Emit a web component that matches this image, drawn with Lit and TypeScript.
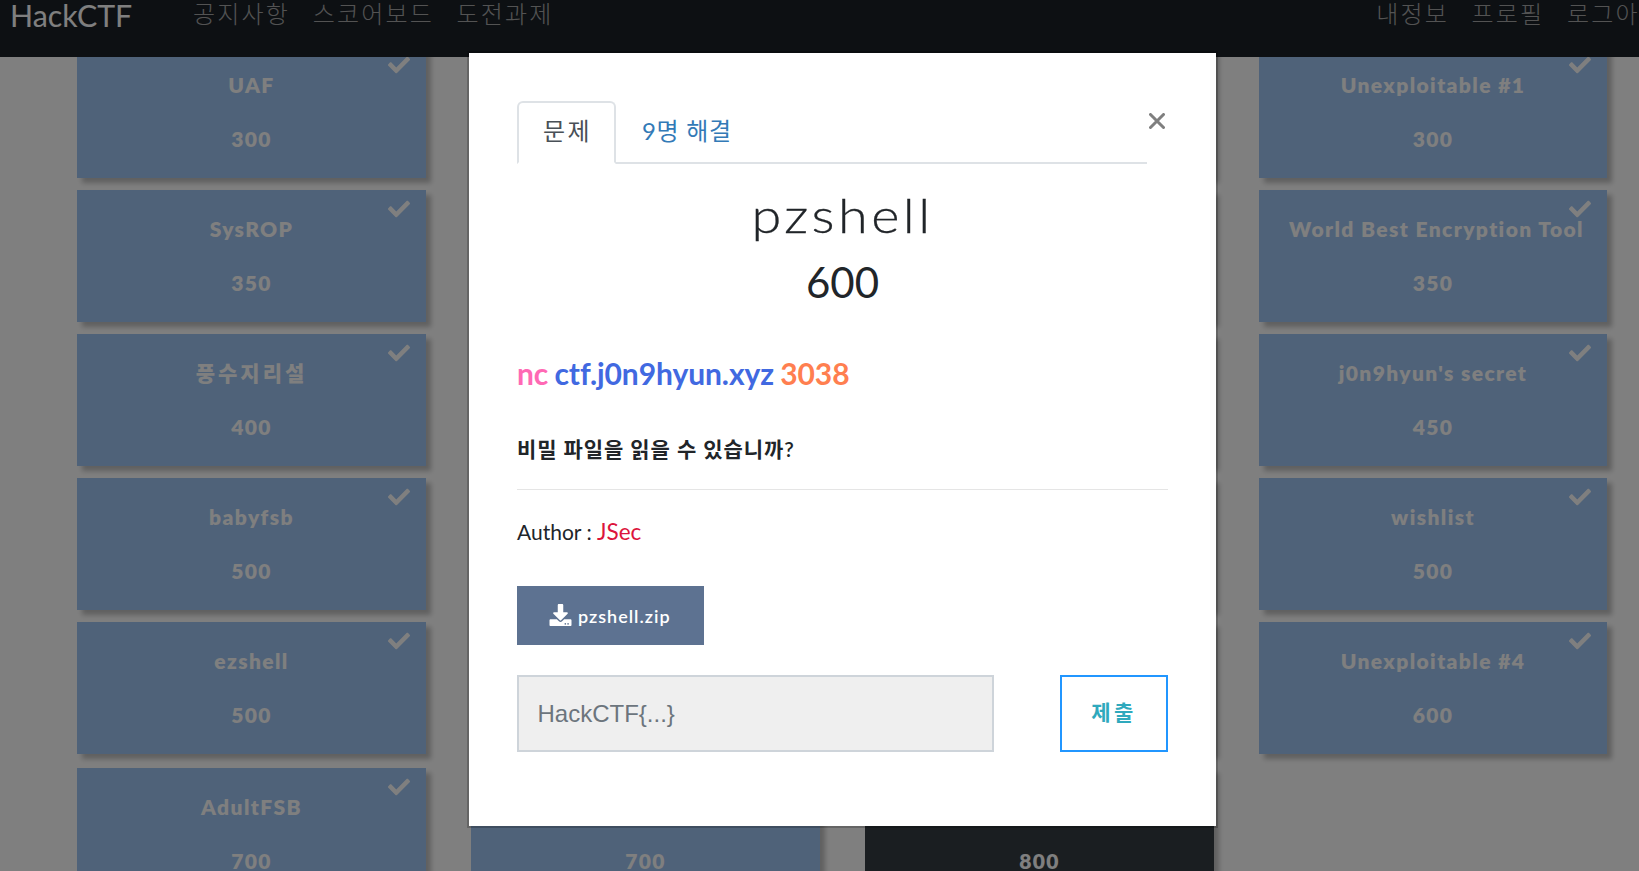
import { LitElement, html, css, svg } from "lit";
import { customElement, property } from "lit/decorators.js";

interface Challenge {
  name: string;
  points: string;
  solved: boolean;
}

const solved = (name = "", points = ""): Challenge => ({ name, points, solved: true });

const CHALLENGES: Challenge[] = [
  solved("UAF", "300"), solved(), solved(), solved("Unexploitable #1", "300"),
  solved("SysROP", "350"), solved(), solved(), solved("World Best Encryption Tool", "350"),
  solved("풍수지리설", "400"), solved(), solved(), solved("j0n9hyun's secret", "450"),
  solved("babyfsb", "500"), solved(), solved(), solved("wishlist", "500"),
  solved("ezshell", "500"), solved(), solved(), solved("Unexploitable #4", "600"),
  solved("AdultFSB", "700"), solved("", "700"), { name: "", points: "800", solved: false },
];

const checkIcon = svg`<path d="M173.898 439.404l-166.4-166.4c-9.997-9.997-9.997-26.206 0-36.204l36.203-36.204c9.997-9.998 26.207-9.998 36.204 0L192 312.69 432.095 72.596c9.997-9.997 26.207-9.997 36.204 0l36.203 36.204c9.997 9.997 9.997 26.206 0 36.204l-294.4 294.401c-9.998 9.997-26.207 9.997-36.204-.001z"/>`;
const downloadIcon = svg`<path d="M216 0h80c13.3 0 24 10.7 24 24v168h87.7c17.8 0 26.7 21.5 14.1 34.1L269.7 378.3c-7.5 7.5-19.8 7.5-27.3 0L90.1 226.1c-12.6-12.6-3.7-34.1 14.1-34.1H192V24c0-13.300 10.700-24 24-24zm296 376v112c0 13.300-10.700 24-24 24H24c-13.300 0-24-10.700-24-24V376c0-13.300 10.700-24 24-24h146.700l49 49c20.100 20.100 52.500 20.100 72.600 0l49-49H488c13.300 0 24 10.700 24 24zm-124 88c0-11-9-20-20-20s-20 9-20 20 9 20 20 20 20-9 20-20zm64 0c0-11-9-20-20-20s-20 9-20 20 9 20 20 20 20-9 20-20z"/>`;

@customElement("challenge-card")
export class ChallengeCard extends LitElement {
  @property({ attribute: false }) challenge!: Challenge;

  static styles = css`
    :host { display: block; }
    .card {
      position: relative;
      box-sizing: border-box;
      height: 132px;
      padding: 25px 30px 0;
      background: #343c42;
      box-shadow: 5px 5px 5px rgba(0, 0, 0, 0.25);
      color: #fff;
      text-align: center;
      font-weight: 800;
      font-size: 21px;
      line-height: 28px;
      letter-spacing: 1.400px;
    }
    .solved { background: #9ec4f2; }
    .name { height: 28px; white-space: nowrap; }
    .korean { letter-spacing: 3px; }
    .points { margin-top: 26px; height: 28px; }
    .check {
      position: absolute;
      top: 8px;
      right: 16px;
      width: 22px;
      height: 22px;
      fill: #fff;
    }
  `;

  render() {
    const c = this.challenge;
    const korean = /[가-힣]/.test(c.name);
    return html`<div class="card ${c.solved ? "solved" : ""}">
      ${c.solved ? html`<svg class="check" viewBox="0 0 512 512">${checkIcon}</svg>` : ""}
      <div class="name ${korean ? "korean" : ""}">${c.name}</div>
      <div class="points">${c.points}</div>
    </div>`;
  }
}

@customElement("challenge-modal")
export class ChallengeModal extends LitElement {
  static styles = css`
    :host { display: block; }
    .modal {
      box-sizing: border-box;
      width: 750.500px;
      height: 776.500px;
      padding: 48px 47.500px 48px 48px;
      border: 2px solid rgba(0, 0, 0, 0.2);
      background: #fff;
      background-clip: padding-box;
      color: #212529;
    }
    .head { display: flex; align-items: flex-start; height: 63px; }
    .tabs {
      display: flex;
      box-sizing: border-box;
      width: 630px;
      height: 63px;
      border-bottom: 2px solid #dee2e6;
      font-size: 24px;
      line-height: 36px;
    }
    .tab { box-sizing: border-box; height: 63px; padding: 10px 24px; color: #337ab7; border: 2px solid transparent; letter-spacing: 0.700px; white-space: nowrap; }
    .active { width: 99px; color: #495057; background: #fff; border-color: #dee2e6 #dee2e6 #fff; border-radius: 6px 6px 0 0; letter-spacing: 2.500px; }
    .close { width: 16px; height: 16px; margin: 12px 0 0 2px; stroke: #7f7f7f; stroke-width: 3; stroke-linecap: round; }
    .title { margin: 23px 0 0; height: 56px; text-align: center; font-weight: 300; font-size: 47px; line-height: 56px; letter-spacing: 3px; transform: scaleX(1.150); -webkit-text-stroke: 0.300px #212529; }
    .value { height: 50px; margin-top: 14px; text-align: center; font-size: 42px; line-height: 50px; }
    .target { margin-top: 48px; height: 36px; font-weight: 700; font-size: 30px; line-height: 36px; letter-spacing: -0.080px; word-spacing: -1px; white-space: nowrap; }
    .cmd { color: hotpink; }
    .host { color: royalblue; }
    .port { color: coral; }
    .question { margin-top: 43px; height: 30px; font-weight: 600; font-size: 21px; line-height: 30px; letter-spacing: 0.900px; white-space: nowrap; }
    .rule { height: 1px; margin-top: 25px; background: #e5e5e5; }
    .author { margin-top: 25px; height: 34px; font-size: 21px; line-height: 34px; }
    .who { color: crimson; font-size: 22.500px; }
    .file {
      display: flex;
      align-items: center;
      box-sizing: border-box;
      width: 187px;
      height: 59px;
      margin-top: 37px;
      padding-left: 32px;
      gap: 6px;
      background: #5d7291;
      color: #fff;
      font-weight: 600;
      font-size: 18px;
      letter-spacing: 1px;
    }
    .download { width: 23px; height: 22px; margin-bottom: 2px; fill: #fff; }
    .form { display: flex; justify-content: space-between; margin-top: 30px; }
    .flag {
      box-sizing: border-box;
      width: 477px;
      height: 77px;
      padding: 0 18.500px;
      border: 2px solid #ced4da;
      border-radius: 0;
      background: #efefef;
      font: 24px "Liberation Sans", sans-serif;
    }
    .flag::placeholder { color: #6c757d; opacity: 1; }
    .submit {
      box-sizing: border-box;
      width: 108px;
      height: 77px;
      padding: 0 0 5px 0;
      border: 2px solid #2196ff;
      background: #fff;
      color: #2fa9bd;
      font: inherit;
      font-weight: 700;
      font-size: 21px;
      letter-spacing: 3.500px;
    }
  `;

  render() {
    return html`<div class="modal">
      <div class="head">
        <div class="tabs"><div class="tab active">문제</div><div class="tab">9명 해결</div></div>
        <svg class="close" viewBox="0 0 16 16"><path d="M1.500 1.500L14.500 14.500M14.500 1.500L1.500 14.500" /></svg>
      </div>
      <div class="title">pzshell</div>
      <div class="value">600</div>
      <div class="target"><span class="cmd">nc</span> <span class="host">ctf.j0n9hyun.xyz</span> <span class="port">3038</span></div>
      <div class="question">비밀 파일을 읽을 수 있습니까?</div>
      <div class="rule"></div>
      <div class="author">Author : <span class="who">JSec</span></div>
      <div class="file"><svg class="download" viewBox="0 0 512 512">${downloadIcon}</svg><span class="filename">pzshell.zip</span></div>
      <div class="form"><input class="flag" placeholder="HackCTF{...}" /><button class="submit">제출</button></div>
    </div>`;
  }
}

@customElement("app-root")
export class AppRoot extends LitElement {
  static styles = css`
    :host {
      display: block;
      position: relative;
      height: 871px;
      overflow: hidden;
      background: #fff;
      font-family: Lato, "Noto Sans CJK KR", sans-serif;
    }
    .nav {
      position: relative;
      z-index: 1;
      display: flex;
      box-sizing: border-box;
      height: 57px;
      padding-left: 10px;
      background: #1a2127;
      color: #a6a6a6;
      font-size: 24px;
      line-height: 36px;
      white-space: nowrap;
      overflow: hidden;
    }
    .brand { width: 183px; color: #fff; font-size: 30.300px; line-height: 31px; }
    .links { display: flex; gap: 22.500px; margin-top: -4px; font-weight: 300; letter-spacing: 2.200px; }
    .right { margin-left: auto; margin-right: -25px; }
    .board {
      display: grid;
      grid-template-columns: repeat(3, 349px) 348px;
      column-gap: 45px;
      row-gap: 12px;
      margin: -11px 0 0 77px;
    }
    .last { margin-top: 2px; }
    .backdrop { position: absolute; inset: 0; z-index: 2; background: rgba(0, 0, 0, 0.5); }
    .dialog { position: absolute; left: 467px; top: 51px; z-index: 3; }
  `;

  render() {
    return html`
      <nav class="nav">
        <div class="brand">HackCTF</div>
        <div class="links"><span>공지사항</span><span>스코어보드</span><span>도전과제</span></div>
        <div class="links right"><span>내정보</span><span>프로필</span><span>로그아웃</span></div>
      </nav>
      <main class="board">
        ${CHALLENGES.map((c, i) => html`<challenge-card class=${i >= 20 ? "last" : ""} .challenge=${c}></challenge-card>`)}
      </main>
      <div class="backdrop"></div>
      <challenge-modal class="dialog"></challenge-modal>
    `;
  }
}
